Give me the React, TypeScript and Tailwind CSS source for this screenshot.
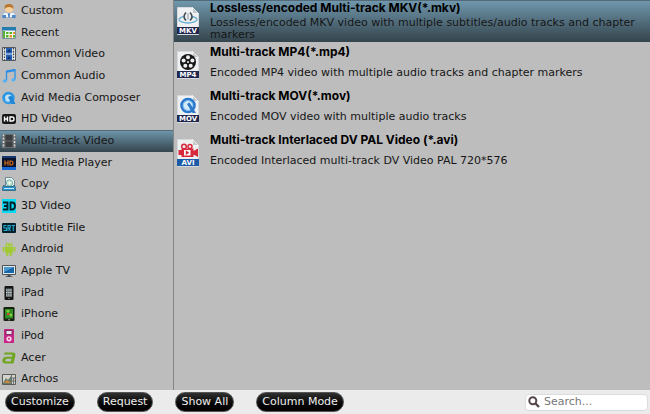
import { useState } from 'react';
import type { ReactNode } from 'react';

const svgProps = { viewBox: '0 0 14 14', className: 'h-3.5 w-3.5 shrink-0', 'aria-hidden': true };

const CustomIcon = () => (
  <svg {...svgProps}>
    <path d="M.5 13.500V11.500q0-3 3.500-3.300l3 1.800 3-1.800q3.500 .3 3.500 3.300v2z" fill="#f4f7fb" stroke="#7f9dc0" strokeWidth=".6" />
    <path d="M.5 11h3.500v3H.5zM10 11h3.500v3H10z" fill="#4c86ca" />
    <path d="M6 9.500h2l-.2 4H6.200z" fill="#4c86ca" />
    <circle cx="7" cy="4.800" r="4" fill="#f5cf9c" />
    <path d="M2.600 5Q2 0 7 0t4.400 5Q10 3 7 3T2.600 5z" fill="#b8762e" />
  </svg>
);

const RecentIcon = () => (
  <svg {...svgProps}>
    <path d="M.5 1.500h13v11H.5z" fill="#f5f8f5" stroke="#7c9098" />
    <path d="M0 1h14v3.500H0z" fill="#267cac" />
    <path d="M1 5h2v7H1z" fill="#58b13a" />
    <path d="M4 6h2.500v2H4zM7.500 6H10v2H7.500zM4 9h2.500v2.500H4zM11 9h2v2.500h-2z" fill="#55b528" />
    <path d="M11 6h2v2h-2zM7.500 9H10v2.500H7.500z" fill="#e98f25" />
  </svg>
);

const FilmBlueIcon = () => (
  <svg {...svgProps}>
    <path d="M.5.5h13v13H.5z" fill="#e7edf2" stroke="#53585e" />
    <path d="M4 1h6v5.500H4zM4 7.500h6V13H4z" fill="#245fb4" />
    <path d="M5 5l2-3 2 3zM5 12l2-3 2 3z" fill="#10306b" />
    <path d="M2.500 1v12M11.500 1v12" stroke="#444" strokeWidth="1.400" strokeDasharray="1.600 1.200" />
  </svg>
);

const NoteIcon = () => (
  <svg {...svgProps}>
    <path d="M4.500 11.500V2l8.500-1.500v10" fill="none" stroke="#2a8fe6" strokeWidth="1.300" />
    <path d="M4.500 2L13 .5v1.800L4.500 3.800z" fill="#2a8fe6" />
    <ellipse cx="2.900" cy="11.900" rx="2.200" ry="1.700" fill="#55b2f5" />
    <ellipse cx="11.400" cy="10.800" rx="2.100" ry="1.600" fill="#55b2f5" />
  </svg>
);

const AvidIcon = () => (
  <svg {...svgProps}>
    <circle cx="6.500" cy="7" r="4.800" fill="#c7e4f7" stroke="#2c96e4" strokeWidth="2.800" />
    <path d="M6 6l3.500-1.500L13.500 13h-4z" fill="#2187da" />
    <path d="M3 9q1 2.500 4 2" fill="none" stroke="#80cbfa" />
  </svg>
);

const HdIcon = () => (
  <svg {...svgProps}>
    <rect x="0" y="2" width="14" height="10" rx="2" fill="#171717" />
    <path d="M2.500 4.500v5M5.500 4.500v5M2.500 7h3M8 5h2.200q1.800 0 1.800 2t-1.800 2H8z" fill="none" stroke="#fff" strokeWidth="1.400" />
  </svg>
);

const FilmIcon = () => (
  <svg {...svgProps}>
    <path d="M0 0h14v14H0z" fill="#686d70" />
    <path d="M3.500 1h7v5.500h-7zM3.500 7.500h7V13h-7z" fill="#3b3d3f" />
    <path d="M1.500.5v13.500M12.500.5v13.500" stroke="#d9dddd" strokeWidth="1.500" strokeDasharray="1.800 1.500" />
  </svg>
);

const HdPlayerIcon = () => (
  <svg {...svgProps}>
    <path d="M0 0h14v14H0z" fill="#08132d" />
    <path d="M0 11h14v3H0z" fill="#1768d4" />
    <path d="M0 0h14v2H0z" fill="#17386f" />
    <path d="M3 4.500v5M6 4.500v5M3 7h3M8 5h1.500q1.500 0 1.500 2t-1.500 2H8z" fill="none" stroke="#d96d15" strokeWidth="1.200" />
  </svg>
);

const CopyIcon = () => (
  <svg {...svgProps}>
    <path d="M3.500.5h6l3 3V10h-9z" fill="#eff6ec" stroke="#567381" strokeWidth=".8" />
    <circle cx="7.500" cy="6" r="3.200" fill="#cce8cb" stroke="#5a9dbd" strokeWidth=".8" />
    <circle cx="7.500" cy="6" r="1" fill="#fff" />
    <path d="M2 8l-1.500 2.500v3h13v-3L12 8l-1 1.500H3z" fill="#2a94cd" stroke="#27556e" strokeWidth=".7" />
    <path d="M2 11.500h10" stroke="#b9e7fb" />
  </svg>
);

const ThreeDIcon = () => (
  <svg {...svgProps}>
    <path d="M0 0h14v14H0z" fill="#08d9f2" />
    <path d="M1 3.500h4.500v7H1M2 7h3.500M8.500 3.500H10q3 0 3 3.500t-3 3.500H8.500z" fill="none" stroke="#06202b" strokeWidth="1.900" />
  </svg>
);

const SrtIcon = () => (
  <svg {...svgProps}>
    <rect x="0" y="2" width="14" height="10" rx="1" fill="#071f2a" />
    <path d="M4.500 4.500H2V7h2.500v2.500H1.500M6 10V4.500h2.200V7H6m1 0l1.500 3M9.500 4.500H13M11.300 4.500V10" fill="none" stroke="#23a9cd" strokeWidth="1.100" />
  </svg>
);

const AndroidIcon = () => (
  <svg {...svgProps}>
    <path d="M3 4.500Q3.500 1.200 7 1.200t4 3.300zM3 5h8v6H3zM.5 5h2v4.500h-2zM11.500 5h2v4.500h-2zM4.300 10h2v4h-2zM7.700 10h2v4h-2z" fill="#a2c936" />
    <path d="M4 0l1.200 2M10 0L8.800 2" stroke="#a2c936" strokeWidth=".7" />
    <path d="M5 2.800h.8v.8H5zM8.200 2.800H9v.8h-.8z" fill="#eee" />
  </svg>
);

const MonitorIcon = () => (
  <svg {...svgProps}>
    <path d="M.5 1.500h13v9H.5z" fill="#e3e8eb" stroke="#4b5359" />
    <path d="M2 3h10v6H2z" fill="#1766a9" />
    <path d="M2 3h10L2 8z" fill="#4b9bd0" />
    <path d="M5.500 11h3v1.300h2V13h-7v-.7h2z" fill="#444c52" />
  </svg>
);

const IpadIcon = () => (
  <svg {...svgProps}>
    <rect x="2.500" y="0" width="9" height="14" rx="1" fill="#151515" />
    <path d="M4 2.500h6v8.500H4z" fill="#667277" />
    <path d="M4 4h6M4 6.500h6M4 9h6" stroke="#d7d9d4" strokeDasharray="1.300 .8" />
    <circle cx="7" cy="12.400" r=".6" fill="#999" />
  </svg>
);

const IphoneIcon = () => (
  <svg {...svgProps}>
    <rect x="1.500" y="0" width="11" height="14" rx="1.300" fill="#16210f" />
    <path d="M3 2h8v9.500H3z" fill="#2f8e25" />
    <path d="M4 4l2-1.500L8 4 6 6zM7 8l2-2 1.500 2L9 10z" fill="#80cf3d" />
    <path d="M5 6h2.500v2H5z" fill="#d34531" />
    <circle cx="7" cy="12.700" r=".7" fill="#ccc" />
  </svg>
);

const IpodIcon = () => (
  <svg {...svgProps}>
    <rect x="2" y="0" width="10" height="14" rx=".6" fill="#c72687" />
    <path d="M4 1.500h6v4H4z" fill="#f5dfed" stroke="#4a1437" strokeWidth=".7" />
    <circle cx="7" cy="9.800" r="2.600" fill="#f6d9eb" />
    <circle cx="7" cy="9.800" r="1" fill="#c72687" />
  </svg>
);

const AcerIcon = () => (
  <svg {...svgProps}>
    <path
      fillRule="evenodd"
      d="M2.500 1.500H10.500Q14 1.500 13.300 4.700L11.500 12.500H3.800Q-.3 12.500.4 9.200 1 5.800 5 5.800H10L10.300 4.500Q10.500 3.600 9.500 3.600H2zM9.500 7.800H5.200Q3.500 7.800 3.200 9.200 3 10.500 4.600 10.500H8.900z"
      fill="#6fa51f"
    />
  </svg>
);

const ArchosIcon = () => (
  <svg {...svgProps}>
    <path d="M.5 2.500h13v10H.5z" fill="#d4d4cf" stroke="#5b5b58" />
    <path d="M1 11l3-5 2 2 3-4v8H1z" fill="#68796a" />
    <path d="M2 11l3-3 4 3z" fill="#d2863d" />
    <path d="M9.500 3v9M9.500 6h4M9.500 9h4M11.500 6v6" stroke="#565b5a" strokeWidth=".8" />
  </svg>
);

const categories: { name: string; icon: ReactNode }[] = [
  { name: 'Custom', icon: <CustomIcon /> },
  { name: 'Recent', icon: <RecentIcon /> },
  { name: 'Common Video', icon: <FilmBlueIcon /> },
  { name: 'Common Audio', icon: <NoteIcon /> },
  { name: 'Avid Media Composer', icon: <AvidIcon /> },
  { name: 'HD Video', icon: <HdIcon /> },
  { name: 'Multi-track Video', icon: <FilmIcon /> },
  { name: 'HD Media Player', icon: <HdPlayerIcon /> },
  { name: 'Copy', icon: <CopyIcon /> },
  { name: '3D Video', icon: <ThreeDIcon /> },
  { name: 'Subtitle File', icon: <SrtIcon /> },
  { name: 'Android', icon: <AndroidIcon /> },
  { name: 'Apple TV', icon: <MonitorIcon /> },
  { name: 'iPad', icon: <IpadIcon /> },
  { name: 'iPhone', icon: <IphoneIcon /> },
  { name: 'iPod', icon: <IpodIcon /> },
  { name: 'Acer', icon: <AcerIcon /> },
  { name: 'Archos', icon: <ArchosIcon /> },
];

// White page with a folded corner, artwork on top and the extension in a strip below
function FileIcon({ label, color = '#20284f', children }: { label: string; color?: string; children: ReactNode }) {
  return (
    <svg viewBox="0 0 22 28" className="h-7 w-[22px] shrink-0" aria-hidden="true">
      <path d="M.5.5h15l6 6v21H.5z" fill="#eef0f2" stroke="#d5d9dc" />
      <path d="M15.500.5v6h6z" fill="#c3c8cc" stroke="#fff" strokeWidth=".6" />
      {children}
      <path d="M0 20h22v7H0z" fill={color} />
      <text x="11" y="26" textAnchor="middle" fontSize="7" fontWeight="bold" fill="#fff">
        {label}
      </text>
    </svg>
  );
}

const MkvIcon = () => (
  <FileIcon label="MKV">
    <ellipse cx="11" cy="12.500" rx="9" ry="3.500" fill="none" stroke="#67aed2" strokeWidth="1.300" />
    <path d="M6.500 5.500h9V14h-9z" fill="#eef0f2" />
    <path d="M9 5.500q-4 4 0 8M13 5.500q4 4 0 8" fill="none" stroke="#414b55" strokeWidth="1.600" />
    <path d="M11 6.500v6" stroke="#8a949b" />
  </FileIcon>
);

const Mp4Icon = () => (
  <FileIcon label="MP4">
    <circle cx="11" cy="11" r="8" fill="#171717" />
    <circle cx="11" cy="6.300" r="2" fill="#eef0f2" />
    <circle cx="15.400" cy="9.500" r="2" fill="#eef0f2" />
    <circle cx="13.700" cy="14.700" r="2" fill="#eef0f2" />
    <circle cx="8.300" cy="14.700" r="2" fill="#eef0f2" />
    <circle cx="6.600" cy="9.500" r="2" fill="#eef0f2" />
    <circle cx="11" cy="11" r="1" fill="#eef0f2" />
  </FileIcon>
);

const MovIcon = () => (
  <FileIcon label="MOV">
    <circle cx="11" cy="10.500" r="6.500" fill="#d3eafa" stroke="#2878ce" strokeWidth="2.600" />
    <circle cx="11" cy="10.500" r="4.800" fill="none" stroke="#82bfeb" />
    <path d="M10 9l2.500-1.500 6.500 10.500h-3.500z" fill="#2d78c7" />
  </FileIcon>
);

const AviIcon = () => (
  <FileIcon label="AVI" color="#1d5ba8">
    <circle cx="7" cy="7.500" r="2.300" fill="#eef0f2" stroke="#d8283c" strokeWidth="1.500" />
    <circle cx="13" cy="7.500" r="2" fill="#eef0f2" stroke="#d8283c" strokeWidth="1.500" />
    <path d="M4.500 9.500h12v8.500h-12zM16.500 12l4.500-2.500v8.500l-4.500-2.500zM1.500 11h3v5h-3z" fill="#d8283c" />
    <path d="M7 11h6.500v5.500H7z" fill="#fff" />
    <path d="M8.800 11.300l3.500 2.400-3.500 2.400z" fill="#d8283c" />
  </FileIcon>
);

const formats = [
  {
    title: 'Lossless/encoded Multi-track MKV(*.mkv)',
    description: 'Lossless/encoded MKV video with multiple subtitles/audio tracks and chapter markers',
    icon: <MkvIcon />,
  },
  {
    title: 'Multi-track MP4(*.mp4)',
    description: 'Encoded MP4 video with multiple audio tracks and chapter markers',
    icon: <Mp4Icon />,
  },
  {
    title: 'Multi-track MOV(*.mov)',
    description: 'Encoded MOV video with multiple audio tracks',
    icon: <MovIcon />,
  },
  {
    title: 'Multi-track Interlaced DV PAL Video (*.avi)',
    description: 'Encoded Interlaced multi-track DV Video PAL 720*576',
    icon: <AviIcon />,
  },
];

const actions = ['Customize', 'Request', 'Show All', 'Column Mode'];

export default function App() {
  const [category, setCategory] = useState('Multi-track Video');
  const [format, setFormat] = useState(0);
  const [search, setSearch] = useState('');

  return (
    <div className="flex min-h-screen flex-col bg-[#bdbdbd] font-['DejaVu_Sans',sans-serif] text-[11px] text-[#161616]">
      <div className="flex flex-1">
        <nav className="flex w-[174px] shrink-0 flex-col border-r border-[#858585]">
          {categories.map((item) => (
            <button
              key={item.name}
              onClick={() => setCategory(item.name)}
              className={`flex flex-1 items-center gap-[5px] pl-0.5 text-left leading-4 ${
                category === item.name
                  ? 'bg-linear-to-b from-[#7199af] to-[#35454d] inset-shadow-[0_1px_#536b78]'
                  : ''
              }`}
            >
              {item.icon}
              <span>{item.name}</span>
            </button>
          ))}
        </nav>

        <main className="flex min-w-0 flex-1 flex-col gap-0.5">
          {formats.map((item, index) => (
            <button
              key={item.title}
              onClick={() => setFormat(index)}
              className={`flex min-h-[42px] items-stretch gap-[11px] pr-2 pl-[3px] text-left ${
                format === index
                  ? 'bg-linear-to-b from-[#7199af] to-[#35454d] inset-shadow-[0_1px_#536b78]'
                  : ''
              }`}
            >
              <span className="flex pt-[7px]">{item.icon}</span>
              <span className="flex flex-1 flex-col">
                <span className="font-['Inter',sans-serif] text-xs leading-[15px] font-bold text-black">
                  {item.title}
                </span>
                <span className="flex flex-1 items-center leading-3">{item.description}</span>
              </span>
            </button>
          ))}
        </main>
      </div>

      <footer className="flex h-6 items-center justify-between bg-[#ebebeb] pr-0.5 pl-[5px]">
        <div className="flex gap-[22px]">
          {actions.map((action) => (
            <button
              key={action}
              className="h-5 rounded-full border border-[#555] bg-linear-to-b from-[#303030] to-black px-[5px] leading-4 text-[#eee]"
            >
              {action}
            </button>
          ))}
        </div>
        <label className="flex h-[17px] w-[123px] items-center gap-1 rounded-sm border border-[#dcdcdc] bg-white pl-0.5">
          <svg viewBox="0 0 12 12" className="h-3 w-3 shrink-0" aria-hidden="true">
            <circle cx="4.800" cy="4.800" r="3.500" fill="none" stroke="#55484a" strokeWidth="2" />
            <path d="M7.500 7.500l3.500 3.500" stroke="#55484a" strokeWidth="2.400" />
          </svg>
          <input
            type="text"
            aria-label="Search"
            placeholder="Search..."
            value={search}
            onChange={(e) => setSearch(e.target.value)}
            className="w-full min-w-0 bg-transparent outline-none placeholder:text-[#777]"
          />
        </label>
      </footer>
    </div>
  );
}
